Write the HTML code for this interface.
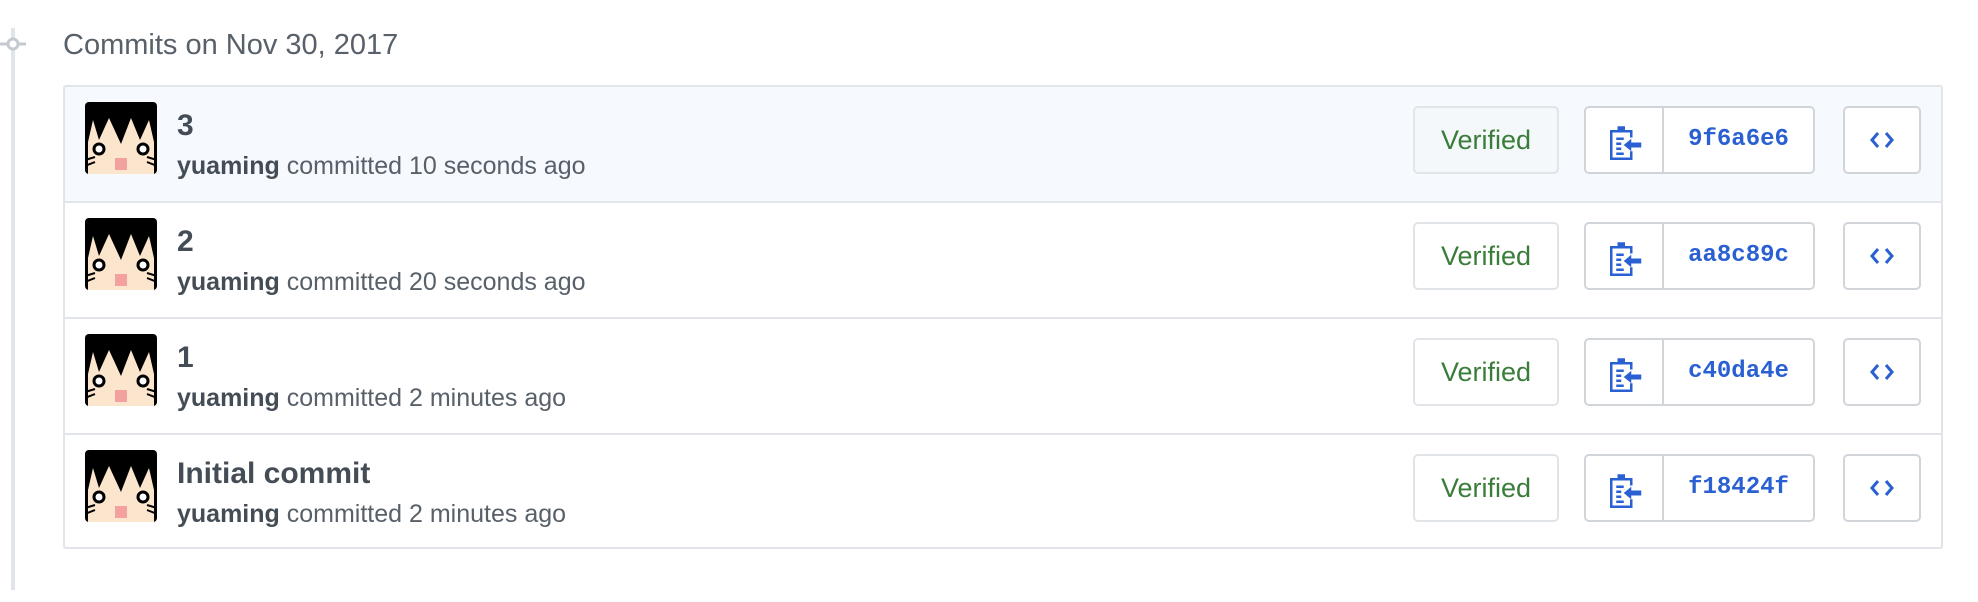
<!DOCTYPE html>
<html><head><meta charset="utf-8"><style>
*{box-sizing:border-box;margin:0;padding:0}
body{width:1978px;height:602px;background:#fff;font-family:"Liberation Sans",sans-serif;position:relative;overflow:hidden}
.line{position:absolute;left:11px;top:28px;width:4px;height:562px;background:#e1e4e8}
.dot{position:absolute;left:0;top:37px;width:26px;height:14px}
h2{position:absolute;left:63px;top:29px;font-size:29px;font-weight:normal;color:#586069}
.box{position:absolute;left:63px;top:85px;width:1880px;height:464px;border:2px solid #e1e4e8;border-radius:3px}
.row{position:relative;height:116px;border-top:2px solid #e1e4e8}
.row:first-child{border-top:none;background:#f6f9fe;height:114px}
.av{position:absolute;left:20px;top:15px;width:72px;height:72px}
.t{position:absolute;left:112px;top:22px;font-size:30px;font-weight:bold;color:#444d56}
.m{position:absolute;left:112px;top:65px;font-size:25px;color:#586069}
.m b{color:#444d56}
.btn{position:absolute;top:19px;height:68px;border:2px solid #dfe2e5;border-radius:5px;background:#fff}
.ver{left:1348px;width:146px;color:#3a7d3a;font-size:27px;text-align:center;line-height:64px;border-color:#e1e4e8}
.row:first-child .ver{background:#f5f8fa}
.sha{left:1519px;width:231px;border-color:#d1d5da}
.sha .ic{position:absolute;left:0;top:0;width:78px;height:64px;border-right:2px solid #d1d5da}
.sha .h{position:absolute;left:78px;right:0;top:0;line-height:64px;text-align:center;font-family:"Liberation Mono",monospace;font-weight:bold;font-size:24px;color:#2a60d2}
.code{left:1778px;width:78px;border-color:#d1d5da}
</style></head><body>
<div class="line"></div>
<svg class="dot" viewBox="0 0 26 14"><line x1="0" y1="7" x2="26" y2="7" stroke="#c6cad0" stroke-width="3"/><circle cx="13" cy="7" r="5" fill="#fff" stroke="#c6cad0" stroke-width="3"/></svg>
<h2>Commits on Nov 30, 2017</h2>
<div class="box">
<div class="row"><svg class="av" viewBox="0 0 72 72"><rect width="72" height="72" rx="4" fill="#000"/><polygon points="3,72 3,40 8,18 14,38 24,16 36,42 46,16 55,38 64,18 69,40 69,72" fill="#fbe6cd"/><path d="M0,58 L10,55 M0,64 L10,60 M62,55 L72,58 M62,60 L72,64" stroke="#000" stroke-width="2"/><circle cx="14" cy="47" r="5" fill="#fff" stroke="#000" stroke-width="3"/><circle cx="58" cy="47" r="5" fill="#fff" stroke="#000" stroke-width="3"/><rect x="30" y="56" width="12" height="12" fill="#f2a0a0"/></svg><div class="t">3</div><div class="m"><b>yuaming</b> committed 10 seconds ago</div><div class="btn ver">Verified</div><div class="btn sha"><div class="ic"><svg width="78" height="64" viewBox="0 0 78 64"><g transform="translate(39 32) scale(1.25) translate(-37 -31)"><path d="M25 23h6v-3h6v3h6v6h-2v-4H27v20h14v-5h2v7H25z" fill="#2a60d2"/><rect x="30" y="29" width="6" height="2" fill="#2a60d2"/><rect x="30" y="33" width="4" height="2" fill="#2a60d2"/><rect x="30" y="37" width="4" height="2" fill="#2a60d2"/><rect x="30" y="41" width="6" height="2" fill="#2a60d2"/><path d="M36 35l6-5v3h8v4h-8v3z" fill="#2a60d2"/></g></svg></div><div class="h">9f6a6e6</div></div><div class="btn code"><svg width="74" height="64" viewBox="0 0 74 64"><path d="M33 25l-6 7 6 7M41 25l6 7-6 7" fill="none" stroke="#2a60d2" stroke-width="3"/></svg></div></div>
<div class="row"><svg class="av" viewBox="0 0 72 72"><rect width="72" height="72" rx="4" fill="#000"/><polygon points="3,72 3,40 8,18 14,38 24,16 36,42 46,16 55,38 64,18 69,40 69,72" fill="#fbe6cd"/><path d="M0,58 L10,55 M0,64 L10,60 M62,55 L72,58 M62,60 L72,64" stroke="#000" stroke-width="2"/><circle cx="14" cy="47" r="5" fill="#fff" stroke="#000" stroke-width="3"/><circle cx="58" cy="47" r="5" fill="#fff" stroke="#000" stroke-width="3"/><rect x="30" y="56" width="12" height="12" fill="#f2a0a0"/></svg><div class="t">2</div><div class="m"><b>yuaming</b> committed 20 seconds ago</div><div class="btn ver">Verified</div><div class="btn sha"><div class="ic"><svg width="78" height="64" viewBox="0 0 78 64"><g transform="translate(39 32) scale(1.25) translate(-37 -31)"><path d="M25 23h6v-3h6v3h6v6h-2v-4H27v20h14v-5h2v7H25z" fill="#2a60d2"/><rect x="30" y="29" width="6" height="2" fill="#2a60d2"/><rect x="30" y="33" width="4" height="2" fill="#2a60d2"/><rect x="30" y="37" width="4" height="2" fill="#2a60d2"/><rect x="30" y="41" width="6" height="2" fill="#2a60d2"/><path d="M36 35l6-5v3h8v4h-8v3z" fill="#2a60d2"/></g></svg></div><div class="h">aa8c89c</div></div><div class="btn code"><svg width="74" height="64" viewBox="0 0 74 64"><path d="M33 25l-6 7 6 7M41 25l6 7-6 7" fill="none" stroke="#2a60d2" stroke-width="3"/></svg></div></div>
<div class="row"><svg class="av" viewBox="0 0 72 72"><rect width="72" height="72" rx="4" fill="#000"/><polygon points="3,72 3,40 8,18 14,38 24,16 36,42 46,16 55,38 64,18 69,40 69,72" fill="#fbe6cd"/><path d="M0,58 L10,55 M0,64 L10,60 M62,55 L72,58 M62,60 L72,64" stroke="#000" stroke-width="2"/><circle cx="14" cy="47" r="5" fill="#fff" stroke="#000" stroke-width="3"/><circle cx="58" cy="47" r="5" fill="#fff" stroke="#000" stroke-width="3"/><rect x="30" y="56" width="12" height="12" fill="#f2a0a0"/></svg><div class="t">1</div><div class="m"><b>yuaming</b> committed 2 minutes ago</div><div class="btn ver">Verified</div><div class="btn sha"><div class="ic"><svg width="78" height="64" viewBox="0 0 78 64"><g transform="translate(39 32) scale(1.25) translate(-37 -31)"><path d="M25 23h6v-3h6v3h6v6h-2v-4H27v20h14v-5h2v7H25z" fill="#2a60d2"/><rect x="30" y="29" width="6" height="2" fill="#2a60d2"/><rect x="30" y="33" width="4" height="2" fill="#2a60d2"/><rect x="30" y="37" width="4" height="2" fill="#2a60d2"/><rect x="30" y="41" width="6" height="2" fill="#2a60d2"/><path d="M36 35l6-5v3h8v4h-8v3z" fill="#2a60d2"/></g></svg></div><div class="h">c40da4e</div></div><div class="btn code"><svg width="74" height="64" viewBox="0 0 74 64"><path d="M33 25l-6 7 6 7M41 25l6 7-6 7" fill="none" stroke="#2a60d2" stroke-width="3"/></svg></div></div>
<div class="row"><svg class="av" viewBox="0 0 72 72"><rect width="72" height="72" rx="4" fill="#000"/><polygon points="3,72 3,40 8,18 14,38 24,16 36,42 46,16 55,38 64,18 69,40 69,72" fill="#fbe6cd"/><path d="M0,58 L10,55 M0,64 L10,60 M62,55 L72,58 M62,60 L72,64" stroke="#000" stroke-width="2"/><circle cx="14" cy="47" r="5" fill="#fff" stroke="#000" stroke-width="3"/><circle cx="58" cy="47" r="5" fill="#fff" stroke="#000" stroke-width="3"/><rect x="30" y="56" width="12" height="12" fill="#f2a0a0"/></svg><div class="t">Initial commit</div><div class="m"><b>yuaming</b> committed 2 minutes ago</div><div class="btn ver">Verified</div><div class="btn sha"><div class="ic"><svg width="78" height="64" viewBox="0 0 78 64"><g transform="translate(39 32) scale(1.25) translate(-37 -31)"><path d="M25 23h6v-3h6v3h6v6h-2v-4H27v20h14v-5h2v7H25z" fill="#2a60d2"/><rect x="30" y="29" width="6" height="2" fill="#2a60d2"/><rect x="30" y="33" width="4" height="2" fill="#2a60d2"/><rect x="30" y="37" width="4" height="2" fill="#2a60d2"/><rect x="30" y="41" width="6" height="2" fill="#2a60d2"/><path d="M36 35l6-5v3h8v4h-8v3z" fill="#2a60d2"/></g></svg></div><div class="h">f18424f</div></div><div class="btn code"><svg width="74" height="64" viewBox="0 0 74 64"><path d="M33 25l-6 7 6 7M41 25l6 7-6 7" fill="none" stroke="#2a60d2" stroke-width="3"/></svg></div></div>
</div>
</body></html>
